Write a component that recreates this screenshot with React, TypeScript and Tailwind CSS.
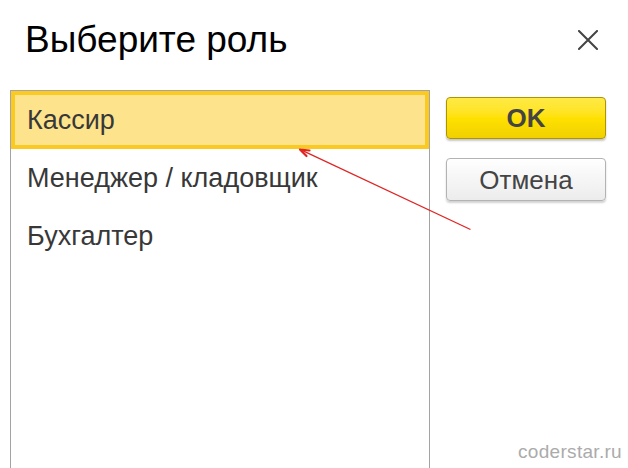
import React, { useState } from "react";

const roles = ["Кассир", "Менеджер / кладовщик", "Бухгалтер"];

function CloseIcon() {
  return (
    <svg width="20" height="20" viewBox="0 0 20 20" fill="none">
      <path d="M1 1 L19 19 M19 1 L1 19" stroke="#444" strokeWidth="2" strokeLinecap="square" />
    </svg>
  );
}

function Pointer() {
  // thin red pointer drawn from the buttons area to the selected row
  return (
    <svg
      className="absolute left-0 top-0 pointer-events-none"
      width="628"
      height="468"
      viewBox="0 0 628 468"
    >
      <line x1="470.5" y1="229.5" x2="301" y2="149.8" stroke="#e02424" strokeWidth="1.3" />
      <path d="M300 149.5 L309.5 150.5 M300 149.5 L306.5 156" stroke="#e02424" strokeWidth="2.2" strokeLinecap="round" />
    </svg>
  );
}

export default function App() {
  const [selected, setSelected] = useState(0);
  return (
    <div className="relative w-[628px] h-[468px] overflow-hidden bg-white font-['Liberation_Sans',Arial,sans-serif]">
      <div className="flex items-start justify-between h-[90px] pl-[25px] pr-[30px] pt-[21px]">
        <h1 className="text-[37px] leading-[37px] text-black">Выберите роль</h1>
        <button className="mt-[9px]" aria-label="Закрыть">
          <CloseIcon />
        </button>
      </div>

      <div className="flex items-start pl-[10px] gap-[16px]">
        <ul className="w-[420px] h-[400px] border border-[#a3a3a3]">
          {roles.map((r, i) => (
            <li
              key={r}
              onClick={() => setSelected(i)}
              className={
                i === selected
                  ? "h-[58px] flex items-center pl-[12px] border-4 border-[#fbca22] bg-[#fde48c] text-[27px] text-[#383838]"
                  : "h-[58px] flex items-center pl-[12px] border-4 border-transparent text-[27px] text-[#383838]"
              }
            >
              {r}
            </li>
          ))}
        </ul>

        <div className="flex flex-col gap-[19px] mt-[7px] w-[160px]">
          <button className="h-[42px] rounded-[4px] border border-[#ab9500] bg-gradient-to-b from-[#ffea45] via-[#ffe100] to-[#f0d000] shadow-[0_2px_2px_rgba(0,0,0,0.22)] text-[26px] font-bold text-[#444] leading-none">
            OK
          </button>
          <button className="h-[43px] rounded-[4px] border border-[#b3b3b3] bg-gradient-to-b from-white to-[#ececec] shadow-[0_2px_2px_rgba(0,0,0,0.18)] text-[26px] text-[#444] leading-none">
            Отмена
          </button>
        </div>
      </div>

      <Pointer />

      <div className="absolute right-[6px] bottom-[2px] text-[19px] tracking-[0.3px] text-[#ababab]">
        coderstar.ru
      </div>
    </div>
  );
}
